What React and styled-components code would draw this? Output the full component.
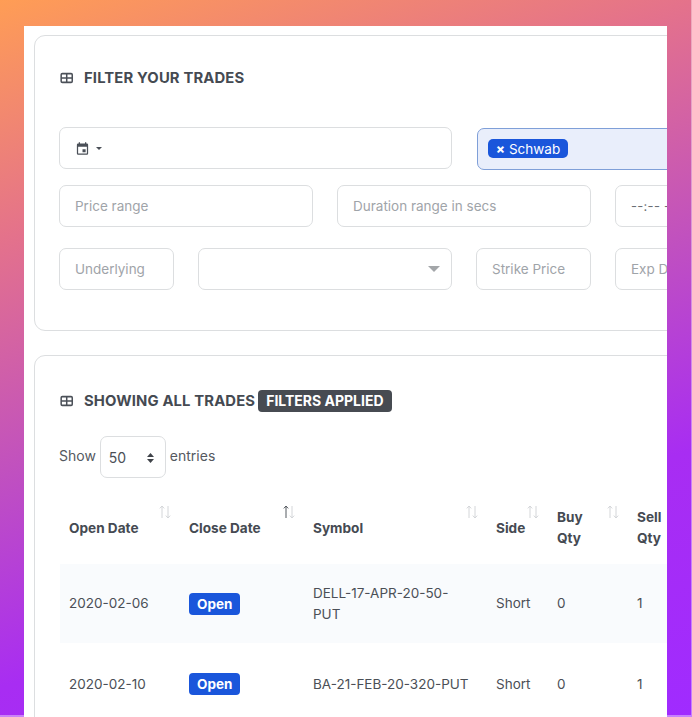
import React from "react";
import styled, { createGlobalStyle } from "styled-components";

const Global = createGlobalStyle`
  html, body { margin: 0; padding: 0; width: 692px; height: 717px; overflow: hidden; }
  body { font-family: "Inter", "Liberation Sans", sans-serif; color: #4b4f56; }
`;

const Page = styled.div`
  width: 692px; height: 717px; box-sizing: border-box; overflow: hidden;
  padding: 26px 25px 0 24px;
  background: linear-gradient(161deg, #ff9d55 0%, #e4728b 25%, #c050c0 50%, #a82df2 72%, #a02bff 100%);
  box-shadow: inset -1px -2px 0 rgba(255, 255, 255, 0.4);
`;
const Sheet = styled.main`
  width: 643px; height: 691px; background: #fff; overflow: hidden;
  padding: 9px 0 0 10px; box-sizing: border-box;
`;
const Card = styled.section`
  width: 760px; box-sizing: border-box; border: 1px solid #dcdee0; border-radius: 11px;
  padding: ${p => p.$pad};
  height: ${p => p.$h};
  margin-bottom: 24px;
`;
const Heading = styled.h2`
  margin: 0; display: flex; align-items: center; font-size: 14.8px; line-height: 22px;
  font-weight: 700; color: #454a52; letter-spacing: 0.15px;
  height: 26px;
`;
const IconSlot = styled.span`
  display: inline-flex; width: 24px; margin-left: 1px; color: #4b5058;
`;
const Pill = styled.span`
  margin-left: 3px; background: #474b52; color: #fff; border-radius: 4px; font-size: 14px;
  font-weight: 700; padding: 0 8px; height: 22px; line-height: 22px; letter-spacing: 0;
`;
const Row = styled.div`
  display: flex; gap: ${p => p.$gap || 24}px; margin-top: ${p => p.$top}px; align-items: flex-start;
`;
const Field = styled.div`
  width: ${p => p.$w}px; height: 42px; flex: none; box-sizing: border-box; border: 1px solid #dcdee0;
  border-radius: 7px; display: flex; align-items: center; padding: 0 15px; font-size: 13.5px;
  color: #9fa4a9; white-space: nowrap; overflow: hidden; position: relative;
`;
const TagBox = styled.div`
  width: 260px; height: 42px; flex: none; box-sizing: border-box; border: 1px solid #7f9fd8; background: #e9eefb;
  border-radius: 7px; display: flex; align-items: center; padding: 0 10px; margin: 1px 0 0 1px;
`;
const Tag = styled.span`
  background: #1a56db; color: #fff; border-radius: 5px; height: 19px; font-size: 13.5px;
  display: inline-flex; align-items: center; padding: 0 8px 0 8px; gap: 4px; margin-top: -1px;
`;
const TagX = styled.span`
  font-size: 13px; font-weight: 800; line-height: 1;
`;
const Caret = styled.span`
  width: 0; height: 0; border-left: ${p => p.$s}px solid transparent; border-right: ${p => p.$s}px solid transparent;
  border-top: ${p => p.$s}px solid ${p => p.$c};
`;
const CalCaret = styled(Caret)`
  margin-left: 6px;
`;
const SelectCaret = styled(Caret)`
  margin-left: auto; margin-right: -4px;
`;
const TimeText = styled.span`
  color: #6b6f75; font-size: 13px; letter-spacing: 0.3px;
`;
const Controls = styled.div`
  display: flex; align-items: center; margin-top: 22px; font-size: 14px; color: #55595f; gap: 4px;
  line-height: 18px;
`;
const ControlLabel = styled.span`
  margin-bottom: 2px;
`;
const PageSelect = styled.div`
  width: 66px; height: 42px; box-sizing: border-box; border: 1px solid #dcdee0; border-radius: 7px;
  display: flex; align-items: center; justify-content: space-between; padding: 2px 10px 0 8px;
  font-size: 14px; color: #4b4f56;
`;
const Table = styled.table`
  border-collapse: collapse; table-layout: fixed; width: 619px; margin: 14px 0 0 1px; font-size: 13.5px; color: #4b4f56;
`;
const Th = styled.th`
  width: ${p => p.$w}px; height: 72px; box-sizing: border-box; text-align: left; padding: 0 30px 0 10px; font-weight: 700; font-size: 13.6px;
  line-height: 21px; color: #454a52; position: relative; vertical-align: middle;
  &:first-child { padding-left: 9px; }
`;
const SortIcon = styled.svg`
  position: absolute; right: 8px; top: 13px;
`;
const Tr = styled.tr`
  background: ${p => p.$alt ? "#f9fbfd" : "#fff"};
`;
const Td = styled.td`
  padding: 0 ${p => p.$pr || 10}px 0 10px; height: ${p => p.$h}px; line-height: 21px; vertical-align: middle;
  &:first-child { padding-left: 9px; }
`;
const Badge = styled.span`
  display: inline-block; background: #1a56db; color: #fff; font-weight: 700; font-size: 13.5px; border-radius: 4px;
  height: 22px; line-height: 22px; padding: 0 8px;
`;

const TableIcon = () => (
  <svg width="14" height="14" viewBox="0 0 24 24" fill="none" stroke="currentColor" strokeWidth="2.6">
    <rect x="2" y="4.5" width="19" height="15" rx="2" fill="none" />
    <path d="M2 12h19M11.5 4.5v15" />
  </svg>
);
const CalIcon = () => (
  <svg width="15" height="15" viewBox="0 0 24 24" fill="#4b5058">
    <path d="M19 3h-1V1h-2v2H8V1H6v2H5a2 2 0 0 0-2 2v14a2 2 0 0 0 2 2h14a2 2 0 0 0 2-2V5a2 2 0 0 0-2-2zm0 16H5V8h14v11zm-7-7h5v5h-5z" transform="translate(0 1)" />
  </svg>
);
const Sort = ({ active }) => (
  <SortIcon width="12" height="14" viewBox="0 0 12 14" fill="none" strokeWidth="1">
    <path d="M3 13V1M.8 3.4 3 1l2.2 2.4" stroke={active ? "#555a60" : "#d4d6d9"} />
    <path d="M9 1v12M6.8 10.6 9 13l2.2-2.4" stroke="#d4d6d9" />
  </SortIcon>
);

const cols = [
  ["Open Date", 119], ["Close Date", 124], ["Symbol", 183], ["Side", 61], ["Buy Qty", 80], ["Sell Qty", 80],
];

export default function App() {
  return (
    <Page>
      <Global />
      <Sheet>
        <Card $pad="29px 24px 0" $h="296px">
          <Heading><IconSlot><TableIcon /></IconSlot>FILTER YOUR TRADES</Heading>
          <Row $top="36" $gap="24">
            <Field $w={393}>
              <CalIcon />
              <CalCaret $s={3} $c="#4b5058" />
            </Field>
            <TagBox><Tag><TagX>×</TagX>Schwab</Tag></TagBox>
          </Row>
          <Row $top="15" $gap="24">
            <Field $w={254}>Price range</Field>
            <Field $w={254}>Duration range in secs</Field>
            <Field $w={150}><TimeText>--:--  --</TimeText></Field>
          </Row>
          <Row $top="21" $gap="24">
            <Field $w={115}>Underlying</Field>
            <Field $w={254}><SelectCaret $s={6} $c="#a3a6a9" /></Field>
            <Field $w={115}>Strike Price</Field>
            <Field $w={150}>Exp Date</Field>
          </Row>
        </Card>
        <Card $pad="32px 24px 0" $h="500px">
          <Heading><IconSlot><TableIcon /></IconSlot>SHOWING ALL TRADES<Pill>FILTERS APPLIED</Pill></Heading>
          <Controls>
            <ControlLabel>Show</ControlLabel>
            <PageSelect>50
              <svg width="9" height="12" viewBox="0 0 9 12" fill="#3f4349"><path d="M4.5 1 8 5H1zM4.5 11 8 7H1z" /></svg>
            </PageSelect>
            <ControlLabel>entries</ControlLabel>
          </Controls>
          <Table>
            <thead>
              <tr>
                {cols.map(([t, w], i) => (
                  <Th key={t} $w={w}>{t}<Sort active={i === 1} /></Th>
                ))}
              </tr>
            </thead>
            <tbody>
              <Tr $alt>
                <Td $h={79}>2020-02-06</Td>
                <Td $h={79}><Badge>Open</Badge></Td>
                <Td $h={79} $pr={13}>DELL-17-APR-20-50-PUT</Td>
                <Td $h={79}>Short</Td>
                <Td $h={79}>0</Td>
                <Td $h={79}>1</Td>
              </Tr>
              <Tr>
                <Td $h={82}>2020-02-10</Td>
                <Td $h={82}><Badge>Open</Badge></Td>
                <Td $h={82} $pr={13}>BA-21-FEB-20-320-PUT</Td>
                <Td $h={82}>Short</Td>
                <Td $h={82}>0</Td>
                <Td $h={82}>1</Td>
              </Tr>
            </tbody>
          </Table>
        </Card>
      </Sheet>
    </Page>
  );
}
